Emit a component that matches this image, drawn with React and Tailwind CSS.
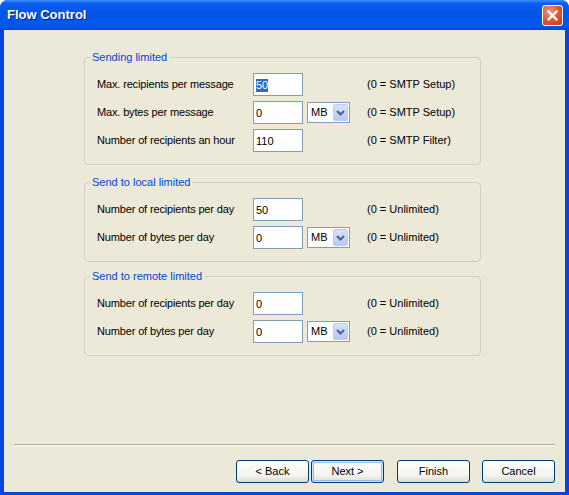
import React from "react";

const groups = [
  {
    title: "Sending limited",
    gap: "mt-0",
    rows: [
      { label: "Max. recipients per message", value: "50", selected: true, hint: "(0 = SMTP Setup)" },
      { label: "Max. bytes per message", value: "0", unit: "MB", hint: "(0 = SMTP Setup)" },
      { label: "Number of recipients an hour", value: "110", hint: "(0 = SMTP Filter)" },
    ],
  },
  {
    title: "Send to local limited",
    gap: "mt-[11px]",
    rows: [
      { label: "Number of recipients per day", value: "50", hint: "(0 = Unlimited)" },
      { label: "Number of bytes per day", value: "0", unit: "MB", hint: "(0 = Unlimited)" },
    ],
  },
  {
    title: "Send to remote limited",
    gap: "mt-[8px]",
    rows: [
      { label: "Number of recipients per day", value: "0", hint: "(0 = Unlimited)" },
      { label: "Number of bytes per day", value: "0", unit: "MB", hint: "(0 = Unlimited)" },
    ],
  },
];

const Combo = ({ value }) => (
  <div className="ml-[4px] w-[43px] h-[21px] border border-[#7F9DB9] bg-white flex items-center justify-between pl-[3px] pr-[1px]">
    <span className="leading-[13px]">{value}</span>
    <div className="w-[15px] h-[17px] rounded-[2px] border border-[#BACCF5] bg-[linear-gradient(to_bottom,#D7E3FD,#B4C9F7)] flex items-center justify-center">
      <svg width="9" height="6" viewBox="0 0 9 6">
        <path d="M1 1 L4.5 4.5 L8 1" fill="none" stroke="#4D6185" strokeWidth="2" />
      </svg>
    </div>
  </div>
);

const Row = ({ row }) => (
  <div className="flex items-center h-[23px]">
    <div className="w-[156px] leading-[13px] tracking-[-0.15px]">{row.label}</div>
    <div className="w-[114px] flex items-center">
      <div className="w-[50px] h-[23px] border border-[#7F9DB9] bg-white pl-[2px] pt-[3px]">
        {row.selected ? (
          <span className="bg-[#316AC5] text-white leading-[13px] inline-block">{row.value}</span>
        ) : (
          <span className="leading-[13px] inline-block">{row.value}</span>
        )}
      </div>
      {row.unit && <Combo value={row.unit} />}
    </div>
    <div className="leading-[13px]">{row.hint}</div>
  </div>
);

const Group = ({ group }) => (
  <fieldset className={"border border-[#D0D0BF] rounded-[4px] pt-[9px] pb-[12px] " + group.gap}>
    <legend className="ml-[5px] px-[2px] text-[#0046D5] leading-[13px]">{group.title}</legend>
    <div className="flex flex-col gap-[5px] pl-[12px]">
      {group.rows.map((row, i) => (
        <Row key={i} row={row} />
      ))}
    </div>
  </fieldset>
);

const XpButton = ({ children, isDefault }) => (
  <button
    className={
      "w-[73px] h-[23px] rounded-[3px] border border-[#003C74] bg-[linear-gradient(to_bottom,#FFFFFF,#F3F3EF_70%,#DCDAD0)] text-black text-[11px] " +
      (isDefault ? "shadow-[inset_0_0_0_1px_#CEE7FF,inset_0_0_0_2px_#98B8F3]" : "")
    }
  >
    {children}
  </button>
);

export default function App() {
  return (
    <div className="w-[569px] h-[495px] flex flex-col rounded-t-[8px] overflow-hidden bg-[#0845DC] text-[11px] text-black font-['Liberation_Sans',Arial,sans-serif]">
      {/* Title bar */}
      <div className="h-[30px] flex items-center justify-between pl-[7px] pr-[6px] bg-[linear-gradient(to_bottom,#3A8CFF_0%,#0A5EF0_12%,#0055E5_45%,#0059EE_85%,#0046DC_100%)]">
        <span className="text-white font-bold text-[13px] [text-shadow:1px_1px_0_#0A1E8C]">Flow Control</span>
        <div className="w-[21px] h-[21px] rounded-[3px] border border-white bg-[radial-gradient(circle_at_35%_30%,#F09A80,#E0512E_55%,#C73A1A)] flex items-center justify-center">
          <svg width="11" height="11" viewBox="0 0 11 11">
            <path d="M1.5 1.5 L9.5 9.5 M9.5 1.5 L1.5 9.5" stroke="white" strokeWidth="2.2" strokeLinecap="square" />
          </svg>
        </div>
      </div>

      {/* Body */}
      <div className="flex-1 mx-[4px] mb-[3px] bg-[#ECE9D8] flex flex-col">
        <div className="w-[397px] ml-[80px] pt-[21px] flex flex-col">
          {groups.map((g, i) => (
            <Group key={i} group={g} />
          ))}
        </div>

        <div className="mt-auto mx-[10px] border-t border-t-[#ACA899] border-b border-b-white" />
        <div className="flex justify-end pr-[10px] pt-[14px] pb-[9px]">
          <XpButton>&lt; Back</XpButton>
          <div className="ml-[2px]">
            <XpButton isDefault>Next &gt;</XpButton>
          </div>
          <div className="ml-[13px]">
            <XpButton>Finish</XpButton>
          </div>
          <div className="ml-[12px]">
            <XpButton>Cancel</XpButton>
          </div>
        </div>
      </div>
    </div>
  );
}
